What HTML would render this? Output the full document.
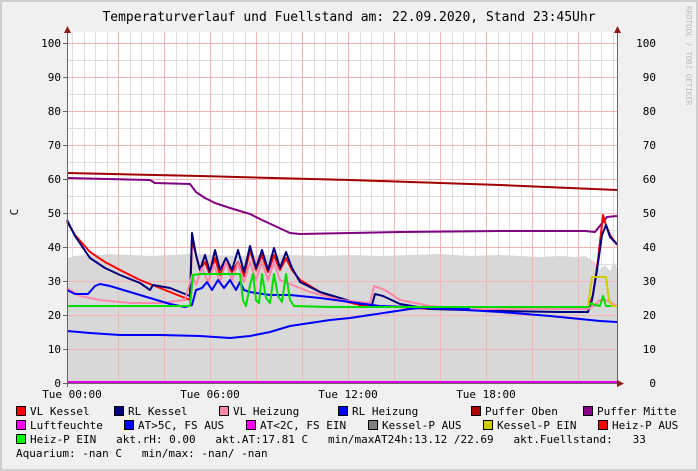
<!DOCTYPE html>
<html><head><meta charset="utf-8"><style>
html,body{margin:0;padding:0}
body{width:698px;height:471px;overflow:hidden;background:#f0f0f0}
svg{display:block}
text{font-family:"DejaVu Sans Mono","Liberation Mono",monospace;}
</style></head><body>
<svg width="698" height="471" viewBox="0 0 698 471" xmlns="http://www.w3.org/2000/svg">
<rect x="0" y="0" width="698" height="471" fill="#cfcfcf"/>
<rect x="2" y="2" width="694" height="467" fill="#f0f0f0"/>
<rect x="67" y="32" width="550" height="351" fill="#fff"/>
<!-- minor vertical grid -->
<g stroke="#dedede" stroke-width="1">
<path d="M84.5 32V383M95.5 32V383M107.5 32V383M130.5 32V383M141.5 32V383M153.5 32V383M176.5 32V383M187.5 32V383M199.5 32V383M222.5 32V383M233.5 32V383M245.5 32V383M268.5 32V383M279.5 32V383M291.5 32V383M314.5 32V383M325.5 32V383M337.5 32V383M360.5 32V383M371.5 32V383M383.5 32V383M406.5 32V383M417.5 32V383M429.5 32V383M452.5 32V383M463.5 32V383M475.5 32V383M498.5 32V383M509.5 32V383M521.5 32V383M544.5 32V383M555.5 32V383M567.5 32V383M590.5 32V383M601.5 32V383M613.5 32V383M72.5 32V383"/>
<path d="M67 60.5H617M67 94.5H617M67 128.5H617M67 162.5H617M67 196.5H617M67 230.5H617M67 264.5H617M67 298.5H617M67 332.5H617M67 366.5H617"/>
</g>
<!-- gray area -->
<path d="M68 383V258L75 256 85 255 100 255 110 254 130 255 150 256 170 255 190 254 215 255 240 256 260 255 290 255 320 256 350 255 380 256 410 255 440 254 470 256 500 255 520 256 540 257 560 256 575 257 585 256 595 262 600 270 605 265 610 271 614 262 617 268V383Z" fill="#d8d8d8"/>
<!-- major grid red -->
<g stroke="#f2b4b4" stroke-width="1">
<path d="M118.5 32V383M164.5 32V383M210.5 32V383M256.5 32V383M302.5 32V383M348.5 32V383M394.5 32V383M440.5 32V383M486.5 32V383M532.5 32V383M578.5 32V383"/>
<path d="M67 43.5H617M67 77.5H617M67 111.5H617M67 145.5H617M67 179.5H617M67 213.5H617M67 247.5H617M67 281.5H617M67 315.5H617M67 349.5H617"/>
</g>
<!-- curves -->
<g fill="none" stroke-width="2" stroke-linejoin="round">
<polyline stroke="#a00000" points="67,173 200,176 350,180 500,185 617,190"/>
<polyline stroke="#800080" points="67,178 150,180 155,183 190,184 196,192 205,198 215,203 230,208 250,214 262,220 275,226 290,233 300,234 400,232 500,231 585,231 595,232 603,222 607,217 617,216"/>
<polyline stroke="#ff0000" points="67,222 75,235 90,252 105,262 120,270 140,280 160,288 180,296 190,300 192,240 196,255 200,270 205,262 210,275 215,258 220,275 226,262 232,272 238,262 244,276 250,250 256,270 262,255 268,272 274,255 280,270 286,258 292,270 300,280 320,292 340,300 360,305 372,306 380,307 400,307 430,309 500,309 588,309 593,295 598,260 603,215 606,225 610,235 617,245"/>
<polyline stroke="#000080" points="67,220 75,236 90,258 105,268 120,275 140,283 150,290 153,285 170,288 185,294 190,296 192,233 196,255 200,270 205,255 210,272 215,250 220,270 226,258 232,270 238,250 244,272 250,246 256,268 262,250 268,270 274,248 280,268 286,252 292,268 300,282 320,292 340,298 360,304 372,305 375,294 383,296 400,304 430,309 500,311 560,312 588,312 592,300 597,270 602,235 606,225 610,237 617,244"/>
<polyline stroke="#ff88aa" points="67,288 80,296 100,300 130,303 160,303 185,300 192,275 196,285 202,268 208,282 214,265 220,282 226,262 232,280 238,263 244,282 250,262 256,280 262,262 268,280 274,262 280,280 290,284 310,292 340,300 370,303 374,286 385,290 400,300 430,306 470,309 588,309 595,305 600,300 606,300 617,306"/>
<polyline stroke="#0000ff" points="67,290 75,294 88,294 95,286 100,284 110,286 130,292 150,298 170,304 185,307 192,305 196,290 202,288 207,282 212,290 218,280 224,288 230,280 236,290 240,282 244,290 250,292 270,295 290,295 320,298 350,302 380,306 410,307 450,309 500,312 550,316 600,321 617,322"/>
<polyline stroke="#0000ff" points="67,331 90,333 120,335 160,335 200,336 230,338 250,336 270,332 290,326 310,323 330,320 350,318 370,315 390,312 410,309 430,307 470,308"/>
<polyline stroke="#00dd00" points="67,306 100,306 190,306 193,275 200,274 240,274 243,300 246,306 250,285 253,274 256,300 259,303 262,274 266,298 270,303 274,274 278,296 282,302 286,274 290,300 294,306 330,307 588,307 591,303 595,305 600,306 603,296 606,306 617,306"/>
<polyline stroke="#cccc00" points="588,306 592,277 606,277 609,300 612,306 617,306"/>
<polyline stroke="#e000e0" points="67,382 617,382"/>
</g>
<!-- axes -->
<path d="M67.5 32V387M617.5 32V387M64 383.5H622" stroke="#666" stroke-width="1"/>
<path d="M64 33L67.5 26 71 33Z M614 33L617.5 26 621 33Z M617 380L624 383.5 617 387Z" fill="#8b1a1a"/>
<g stroke="#666"><path d="M63 43.5H67M63 77.5H67M63 111.5H67M63 145.5H67M63 179.5H67M63 213.5H67M63 247.5H67M63 281.5H67M63 315.5H67M63 349.5H67M63 383.5H67"/></g>
<!-- title -->
<text x="349" y="21" font-size="13" text-anchor="middle" fill="#000">Temperaturverlauf und Fuellstand am: 22.09.2020, Stand 23:45Uhr</text>
<text transform="translate(686,6) rotate(90)" font-size="7.5" fill="#bbb">RRDTOOL / TOBI OETIKER</text>
<text transform="translate(18,212) rotate(-90)" font-size="11" text-anchor="middle" fill="#000">C</text>
<g font-size="11" fill="#000" text-anchor="end">
<text x="61" y="47">100</text><text x="61" y="81">90</text><text x="61" y="115">80</text><text x="61" y="149">70</text><text x="61" y="183">60</text><text x="61" y="217">50</text><text x="61" y="251">40</text><text x="61" y="285">30</text><text x="61" y="319">20</text><text x="61" y="353">10</text><text x="61" y="387">0</text>
</g>
<g font-size="11" fill="#000" text-anchor="end">
<text x="656" y="47">100</text><text x="656" y="81">90</text><text x="656" y="115">80</text><text x="656" y="149">70</text><text x="656" y="183">60</text><text x="656" y="217">50</text><text x="656" y="251">40</text><text x="656" y="285">30</text><text x="656" y="319">20</text><text x="656" y="353">10</text><text x="656" y="387">0</text>
</g>
<g font-size="11" fill="#000" text-anchor="middle">
<text x="72" y="398">Tue 00:00</text><text x="210" y="398">Tue 06:00</text><text x="348" y="398">Tue 12:00</text><text x="486" y="398">Tue 18:00</text>
</g>
<!-- legend -->
<g stroke="#000" stroke-width="1">
<rect x="16.5" y="406.5" width="9" height="9" fill="#ff0000"/>
<rect x="114.5" y="406.5" width="9" height="9" fill="#000080"/>
<rect x="219.5" y="406.5" width="9" height="9" fill="#ff88aa"/>
<rect x="338.5" y="406.5" width="9" height="9" fill="#0000ff"/>
<rect x="471.5" y="406.5" width="9" height="9" fill="#aa0000"/>
<rect x="583.5" y="406.5" width="9" height="9" fill="#880088"/>
<rect x="16.5" y="420.5" width="9" height="9" fill="#ff00ff"/>
<rect x="124.5" y="420.5" width="9" height="9" fill="#0000ff"/>
<rect x="246.5" y="420.5" width="9" height="9" fill="#ff00ff"/>
<rect x="368.5" y="420.5" width="9" height="9" fill="#808080"/>
<rect x="483.5" y="420.5" width="9" height="9" fill="#cccc00"/>
<rect x="598.5" y="420.5" width="9" height="9" fill="#ff0000"/>
<rect x="16.5" y="434.5" width="9" height="9" fill="#00ff00"/>
</g>
<g font-size="11" fill="#000" style="white-space:pre">
<text x="30" y="415">VL Kessel</text>
<text x="128" y="415">RL Kessel</text>
<text x="233" y="415">VL Heizung</text>
<text x="352" y="415">RL Heizung</text>
<text x="485" y="415">Puffer Oben</text>
<text x="597" y="415">Puffer Mitte</text>
<text x="30" y="429">Luftfeuchte</text>
<text x="138" y="429">AT&gt;5C, FS AUS</text>
<text x="260" y="429">AT&lt;2C, FS EIN</text>
<text x="382" y="429">Kessel-P AUS</text>
<text x="497" y="429">Kessel-P EIN</text>
<text x="612" y="429">Heiz-P AUS</text>
<text x="30" y="443" xml:space="preserve">Heiz-P EIN   akt.rH: 0.00   akt.AT:17.81 C   min/maxAT24h:13.12 /22.69   akt.Fuellstand:   33</text>
<text x="16" y="457" xml:space="preserve">Aquarium: -nan C   min/max: -nan/ -nan</text>
</g>
</svg>
</body></html>
